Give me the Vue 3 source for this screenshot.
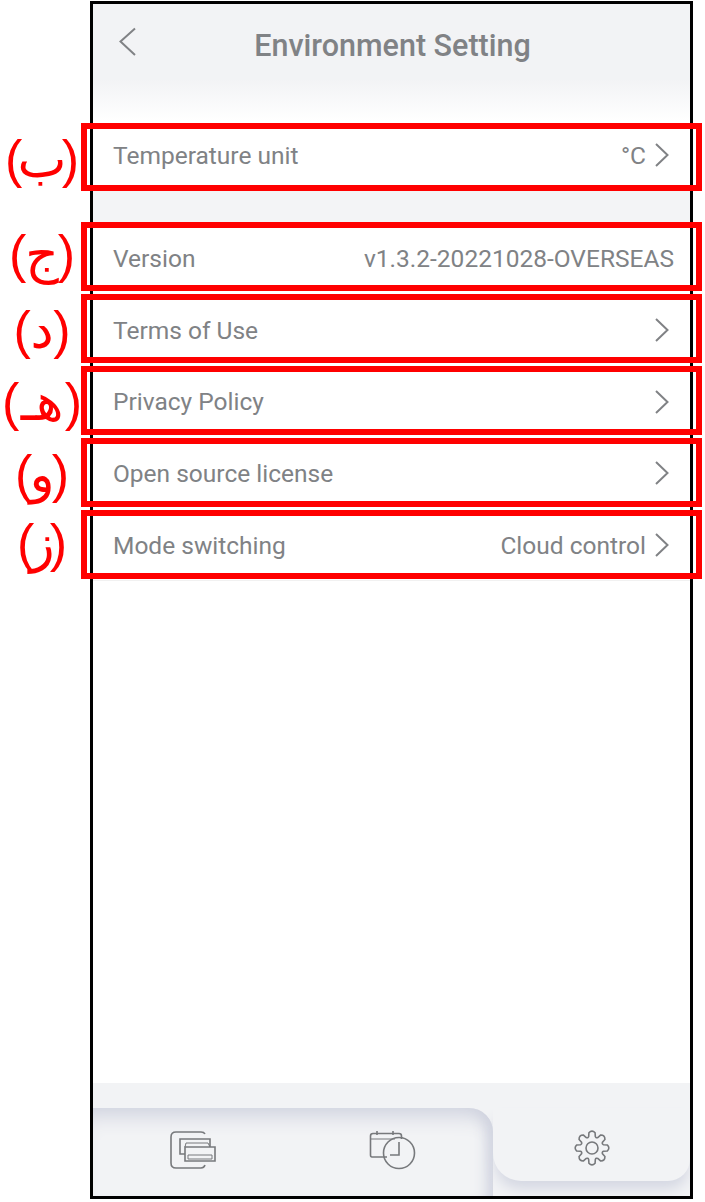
<template>
  <div class="page">
    <div class="phone">
      <header class="nav">
        <svg class="back" width="20" height="30" viewBox="0 0 20 30" fill="none">
          <path d="M18 1.500 L3.500 14.500 L18 28" />
        </svg>
        <h1 class="title">Environment Setting</h1>
      </header>

      <section class="group first">
        <div class="row">
          <span class="tag" :style="tagStyle(first)">
            <span>(</span><span class="glyph">{{ first.tag }}</span><span>)</span>
          </span>
          <span class="mark"></span>
          <span class="name">Temperature unit</span>
          <span class="value">°C</span>
          <svg class="arrow" width="16" height="26" viewBox="0 0 16 26" fill="none">
            <path d="M2 2 L13.500 13 L2 24" />
          </svg>
        </div>
      </section>

      <section class="group second">
        <div v-for="row in rows" :key="row.name" class="row">
          <span class="tag" :style="tagStyle(row)">
            <span>(</span><span class="glyph">{{ row.tag }}</span><span>)</span>
          </span>
          <span class="mark"></span>
          <span class="name">{{ row.name }}</span>
          <span v-if="row.value" class="value" :class="{ flush: !row.arrow }">{{ row.value }}</span>
          <svg v-if="row.arrow" class="arrow" width="16" height="26" viewBox="0 0 16 26" fill="none">
            <path d="M2 2 L13.500 13 L2 24" />
          </svg>
        </div>
      </section>

      <div class="spacer"></div>

      <footer class="tabbar">
        <div class="tabs">
          <div class="tab">
            <svg width="46" height="38" viewBox="0 0 46 38" fill="none">
              <path d="M35 3 Q34 1 31 1 H6 Q1 1 1 6 V32 Q1 37 6 37 H31 Q34 37 35 34" />
              <path d="M15 23 H10 V8 H40 V16" />
              <path d="M15 16 H45 V30 H15 Z" />
              <path d="M18 24 H42 V28 H18 Z" class="thin" />
              <path d="M15 16 L16 12 H38 L40 16" class="thin" />
            </svg>
          </div>
          <div class="tab">
            <svg width="48" height="42" viewBox="0 0 48 42" fill="none">
              <path d="M18 28 H3 Q1.500 28 1.500 26 V7 Q1.500 4.500 4 4.500 H30 Q32.500 4.500 32.500 7 V10" />
              <path d="M1.500 10 H26" class="thin" />
              <path d="M8 2 V6 M24 2 V6" />
              <circle cx="30" cy="24" r="15.500" />
              <path d="M30 13 V26 H21" />
            </svg>
          </div>
        </div>
        <div class="tab active">
          <svg width="38" height="38" viewBox="-19 -19 38 38" fill="none">
            <path :d="gearPath" />
            <circle r="6" />
          </svg>
        </div>
      </footer>
    </div>
  </div>
</template>

<script setup>
const first = { tag: 'ب', shift: 4, span: 74 }

const rows = [
  { tag: 'ج', shift: -4, span: 66, name: 'Version', value: 'v1.3.2-20221028-OVERSEAS', arrow: false },
  { tag: 'د', shift: 0, span: 57, name: 'Terms of Use', arrow: true },
  { tag: 'هـ', shift: 0, span: 80, name: 'Privacy Policy', arrow: true },
  { tag: 'و', shift: 1, span: 54, name: 'Open source license', arrow: true },
  { tag: 'ز', shift: -2, span: 50, name: 'Mode switching', value: 'Cloud control', arrow: true }
]

// label is centred on x = 42, its width differs per glyph
const tagStyle = (row) => ({
  width: `${row.span}px`,
  transform: `translate(-50%, ${row.shift}px)`
})

// gear outline: 8 rounded teeth
const point = (r, a) => `${(r * Math.cos(a)).toFixed(2)} ${(r * Math.sin(a)).toFixed(2)}`
const buildGear = () => {
  const step = Math.PI / 4
  let d = ''
  for (let i = 0; i < 8; i++) {
    const c = i * step - Math.PI / 2
    const start = point(12, c - 0.28)
    d += `${i === 0 ? 'M' : 'Q' + point(10.5, c - step / 2) + ' '}${start} `
    d += `L${point(15.5, c - 0.2)} Q${point(18.5, c)} ${point(15.5, c + 0.2)} L${point(12, c + 0.28)} `
  }
  const first = point(12, -Math.PI / 2 - 0.28)
  return `${d}Q${point(10.5, -Math.PI / 2 - step / 2)} ${first} Z`
}
const gearPath = buildGear()
</script>

<style scoped>
.page {
  width: 705px;
  height: 1202px;
  padding: 1px 0 0 90px;
  box-sizing: border-box;
  font-family: Roboto, "Liberation Sans", sans-serif;
}

.phone {
  width: 603px;
  height: 1198px;
  border: 3px solid #000;
  box-sizing: border-box;
  background: #fff;
  display: flex;
  flex-direction: column;
  position: relative;
}

.nav {
  height: 119px;
  flex-shrink: 0;
  display: flex;
  align-items: flex-start;
  justify-content: center;
  position: relative;
  background: linear-gradient(#f2f3f5 0, #f2f3f5 75px, #fff 117px);
}

.back {
  position: absolute;
  left: 24px;
  top: 23px;
}

.back path,
.arrow path {
  stroke: #808285;
  stroke-width: 2;
}

.title {
  margin: 22px 0 0 2px;
  font-size: 30.500px;
  line-height: 40px;
  font-weight: 500;
  color: #808285;
}

.group {
  background: #fff;
}

.group.second {
  border-top: 31px solid #f3f4f6;
  border-bottom: 1px solid #f1f1f1;
}

.row {
  height: 72px;
  padding: 0 20px;
  box-sizing: border-box;
  display: flex;
  align-items: center;
  position: relative;
  font-size: 24.500px;
  color: #808285;
}

.group.first .row {
  height: 68px;
  padding-bottom: 4px;
}

.group.second .row:nth-child(3) {
  padding-bottom: 1px;
}

.group.second .row:nth-child(n+4) {
  padding-bottom: 2px;
}

.group.second .row:last-child {
  margin-bottom: -2px;
}

.name {
  flex: 1;
}

.flush {
  margin-right: -4px;
}

.arrow {
  margin-left: 8px;
}

.mark {
  position: absolute;
  left: -12px;
  right: -12px;
  top: 0;
  bottom: 3px;
  border: 6px solid #f00;
  pointer-events: none;
}

.group.first .mark {
  bottom: 0;
}

.tag {
  position: absolute;
  left: -51px;
  display: flex;
  justify-content: space-between;
  font-family: "Liberation Sans", "DejaVu Sans", sans-serif;
  font-size: 52px;
  color: #f00;
  white-space: nowrap;
}

.glyph {
  flex: 0 0 0;
  min-width: 0;
  display: flex;
  justify-content: center;
}

.spacer {
  flex: 1;
}

.tabbar {
  height: 113px;
  flex-shrink: 0;
  background: #f2f3f5;
  display: flex;
  padding-top: 25px;
  box-sizing: border-box;
  overflow: hidden;
}

.tabs {
  width: 400px;
  display: flex;
  border-top-right-radius: 24px;
  box-shadow: inset 0 20px 20px -12px #d0d3df, inset -16px 0 14px -10px #d0d3df;
}

.tab {
  flex: 1;
  display: flex;
  align-items: center;
  justify-content: center;
  padding: 8px 0 12px;
}

.tab svg path,
.tab svg circle {
  stroke: #77797c;
  stroke-width: 1.6;
}

.tab svg .thin {
  stroke-width: 1;
}

.tab.active {
  background: #f2f3f5;
  border-radius: 0 0 22px 28px;
  box-shadow: 0 10px 14px -2px #d4d7e2;
  margin-bottom: 15px;
  padding: 6px 0 0;
}
</style>

<style>
body {
  background: #fff;
}
</style>
